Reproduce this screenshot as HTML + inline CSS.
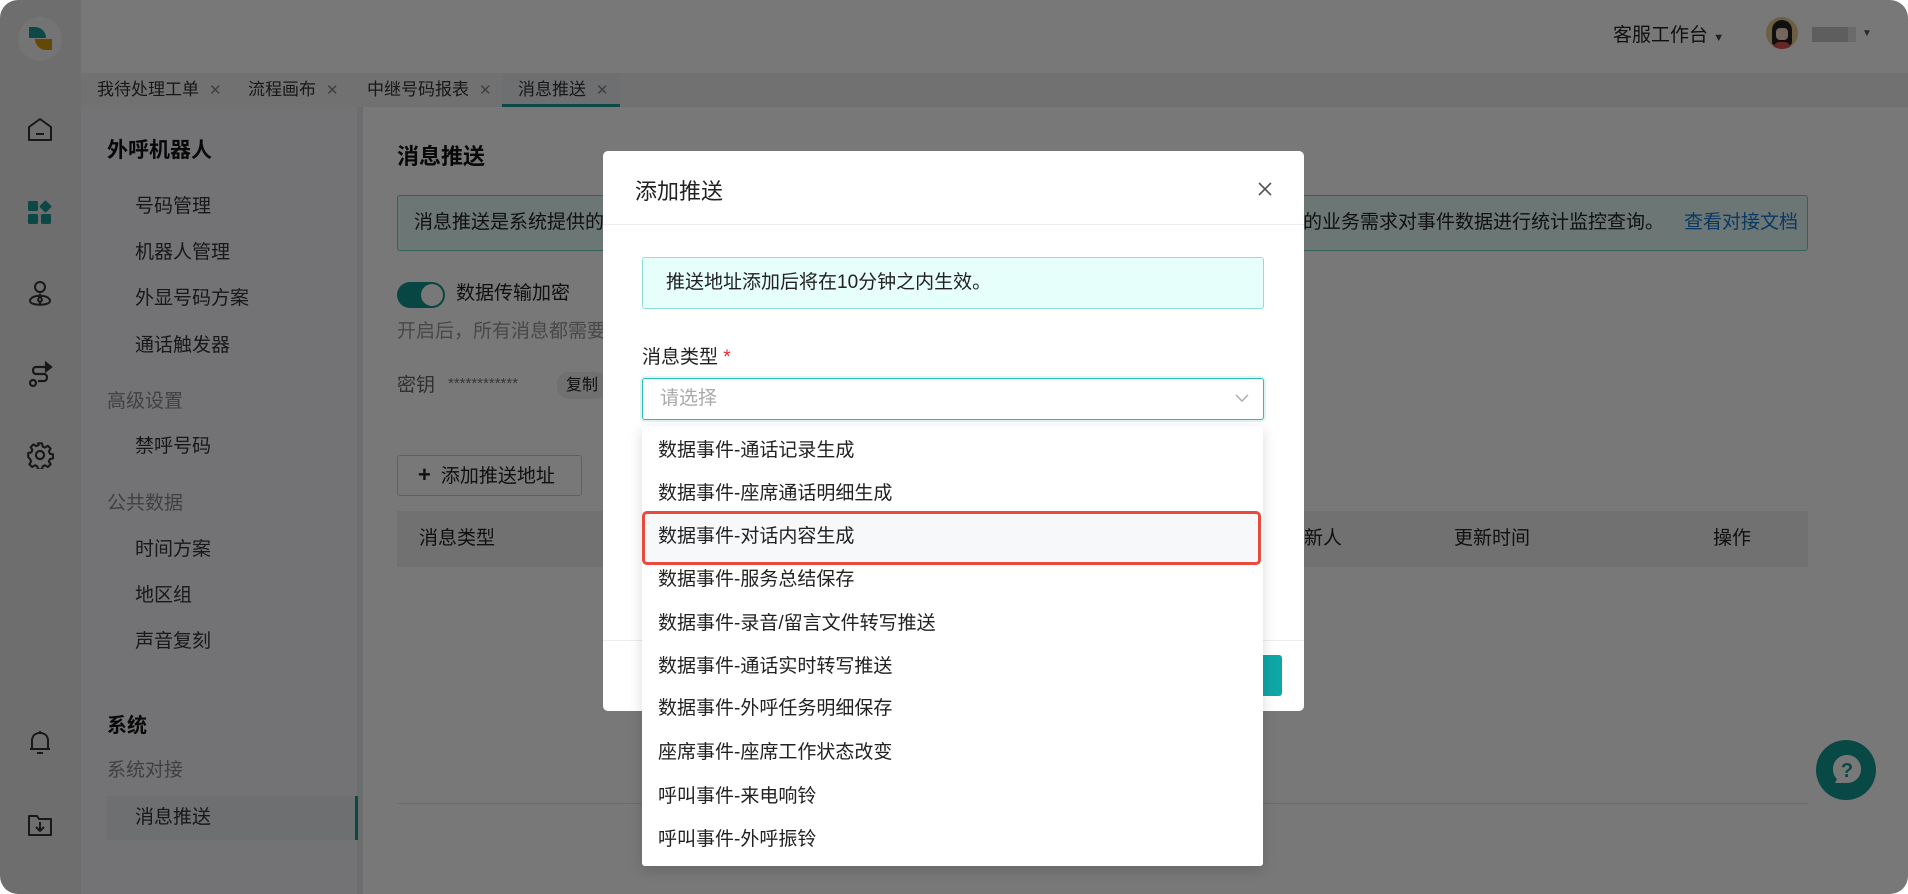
<!DOCTYPE html>
<html><head><meta charset="utf-8">
<style>
*{box-sizing:border-box;margin:0;padding:0}
html,body{width:1908px;height:894px;overflow:hidden;background:#fff}
body{font-family:"Liberation Sans","Noto Sans CJK SC",sans-serif;color:#222;position:relative}
.win{position:absolute;left:0;top:0;width:1908px;height:894px;border-radius:18px;overflow:hidden;background:#fff}
.abs{position:absolute;white-space:nowrap}
.rail{left:0;top:0;width:81px;height:894px;background:#e9eaec}
.top{left:81px;top:0;width:1827px;height:73px;background:#fff}
.tabs{left:81px;top:73px;width:1827px;height:34px;background:#f0f0f0}
.tab{position:absolute;top:73px;height:34px;line-height:34px;font-size:17px;color:#333}
.tab .x{color:#888;font-size:15px;margin-left:10px}
.side{left:81px;top:107px;width:282px;height:787px;background:#f4f5f8}
.si{position:absolute;font-size:19px;line-height:24px;color:#333}
.sg{color:#888}
.sb{font-weight:bold;font-size:21px;color:#111}
.overlay{left:0;top:0;width:1908px;height:894px;background:rgba(0,0,0,0.53)}
.t{font-size:19px;line-height:24px}
</style></head><body>
<div class="win">
<div class="abs rail"></div>
<div class="abs" style="left:18px;top:17px;width:44px;height:44px;border-radius:50%;background:#f6f6f6"></div>
<div class="abs" style="left:29px;top:27px;width:17px;height:11px;background:#1a9a96;border-top-right-radius:11px"></div>
<div class="abs" style="left:35px;top:39px;width:17px;height:11px;background:#d49a0c;border-bottom-left-radius:11px"></div>
<!-- rail icons -->
<svg class="abs" style="left:26px;top:116px" width="28" height="28" viewBox="0 0 28 28" fill="none" stroke="#333" stroke-width="2"><path d="M3 11 L14 3 L25 11 V24 H3 Z" stroke-linejoin="round"/><path d="M10 18 H18"/></svg>
<svg class="abs" style="left:27px;top:199px" width="28" height="28" viewBox="0 0 28 28" fill="#1a9a96"><rect x="1" y="2" width="10" height="10" rx="1.5"/><rect x="14" y="3" width="9" height="9" rx="1" transform="rotate(45 18.5 7.5)"/><rect x="1" y="15" width="10" height="10" rx="1.5"/><rect x="14" y="15" width="10" height="10" rx="1.5"/></svg>
<svg class="abs" style="left:26px;top:279px" width="28" height="30" viewBox="0 0 28 30" fill="none" stroke="#333" stroke-width="2"><circle cx="14" cy="8" r="5"/><path d="M4 22 C4 15 24 15 24 22 C24 27 4 27 4 22 Z"/><path d="M14 16 L12 21 L14 24 L16 21 Z"/></svg>
<svg class="abs" style="left:26px;top:361px" width="28" height="30" viewBox="0 0 28 30" fill="none" stroke="#333" stroke-width="2.2"><path d="M20 6 H10 C6 6 6 13 10 13 H18 C22 13 22 20 18 20 H12"/><circle cx="7" cy="22" r="3"/><path d="M20 2 L25 6 L20 10 Z" fill="#333"/></svg>
<svg class="abs" style="left:26px;top:441px" width="28" height="28" viewBox="0 0 24 24" fill="none" stroke="#333" stroke-width="1.8"><circle cx="12" cy="12" r="3.5"/><path d="M10.3 2h3.4l.6 2.7 2 .9 2.4-1.5 2.4 2.4-1.5 2.4.9 2 2.7.6v3.4l-2.7.6-.9 2 1.5 2.4-2.4 2.4-2.4-1.5-2 .9-.6 2.7h-3.4l-.6-2.7-2-.9-2.4 1.5-2.4-2.4 1.5-2.4-.9-2L1.9 13.7v-3.4l2.7-.6.9-2L4 5.3l2.4-2.4 2.4 1.5 2-.9z" stroke-linejoin="round"/></svg>
<svg class="abs" style="left:27px;top:729px" width="26" height="28" viewBox="0 0 26 28" fill="none" stroke="#333" stroke-width="2"><path d="M5 20 V12 C5 7 8 4 13 4 C18 4 21 7 21 12 V20 H3 H23"/><path d="M10 24 H16"/><path d="M13 2 V4"/></svg>
<svg class="abs" style="left:27px;top:811px" width="26" height="28" viewBox="0 0 26 28" fill="none" stroke="#333" stroke-width="2"><path d="M2 5 H10 L12 8 H24 V24 H2 Z" stroke-linejoin="round"/><path d="M13 11 V19 M9 16 L13 20 L17 16"/></svg>

<div class="abs top"></div>
<div class="abs" style="left:1613px;top:20px;font-size:19px;color:#222">客服工作台 <span style="font-size:11px;color:#444">▼</span></div>
<div class="abs" style="left:1766px;top:17px;width:32px;height:32px;border-radius:50%;background:#e8c98c;overflow:hidden"><div style="position:absolute;left:6px;top:3px;width:20px;height:26px;background:#222;border-radius:10px 10px 4px 4px"></div><div style="position:absolute;left:10px;top:11px;width:12px;height:12px;background:#f3d9c5;border-radius:4px"></div><div style="position:absolute;left:8px;top:25px;width:16px;height:10px;background:#d9534f;border-radius:6px"></div></div>
<div class="abs" style="left:1812px;top:27px;width:36px;height:15px;background:#c8c8c8"></div>
<div class="abs" style="left:1848px;top:27px;width:8px;height:15px;background:#e4e4e4"></div>
<div class="abs" style="left:1862px;top:28px;font-size:10px;color:#555">▼</div>

<div class="abs tabs"></div>
<div class="abs" style="left:502px;top:73px;width:118px;height:34px;background:#e9ebee;border-bottom:3px solid #1a9a96"></div>
<div class="tab" style="left:97px">我待处理工单<span class="x">✕</span></div>
<div class="tab" style="left:248px">流程画布<span class="x">✕</span></div>
<div class="tab" style="left:367px">中继号码报表<span class="x">✕</span></div>
<div class="tab" style="left:518px">消息推送<span class="x">✕</span></div>

<div class="abs side"></div>
<div class="abs" style="left:357px;top:107px;width:6px;height:787px;background:#e6e8ec"></div>
<div class="si sb" style="left:107px;top:139px">外呼机器人</div>
<div class="si" style="left:135px;top:195px">号码管理</div>
<div class="si" style="left:135px;top:241px">机器人管理</div>
<div class="si" style="left:135px;top:287px">外显号码方案</div>
<div class="si" style="left:135px;top:334px">通话触发器</div>
<div class="si sg" style="left:107px;top:390px">高级设置</div>
<div class="si" style="left:135px;top:435px">禁呼号码</div>
<div class="si sg" style="left:107px;top:492px">公共数据</div>
<div class="si" style="left:135px;top:538px">时间方案</div>
<div class="si" style="left:135px;top:584px">地区组</div>
<div class="si" style="left:135px;top:630px">声音复刻</div>
<div class="si sb" style="left:107px;top:714px;font-size:20px">系统</div>
<div class="si sg" style="left:107px;top:759px">系统对接</div>
<div class="abs" style="left:107px;top:796px;width:251px;height:44px;background:#eaebee;border-right:3px solid #1a9a96"></div>
<div class="si" style="left:135px;top:806px">消息推送</div>

<!-- main -->
<div class="abs" style="left:397px;top:139px;font-size:22px;font-weight:bold;color:#111">消息推送</div>
<div class="abs" style="left:397px;top:195px;width:1411px;height:56px;background:#e6fbf8;border:1px solid #6fd1c6;border-radius:3px"></div>
<div class="abs t" style="left:414px;top:211px;color:#222">消息推送是系统提供的</div>
<div class="abs t" style="left:1303px;top:211px;color:#222">的业务需求对事件数据进行统计监控查询。<span style="color:#1677d2;margin-left:20px">查看对接文档</span></div>
<div class="abs" style="left:397px;top:282px;width:48px;height:26px;border-radius:13px;background:#11968f"></div>
<div class="abs" style="left:421px;top:284px;width:22px;height:22px;border-radius:50%;background:#fff"></div>
<div class="abs t" style="left:456px;top:282px">数据传输加密</div>
<div class="abs t" style="left:397px;top:320px;color:#999">开启后，所有消息都需要</div>
<div class="abs t" style="left:397px;top:374px;color:#666">密钥</div>
<div class="abs" style="left:448px;top:375px;font-size:15px;color:#777">************</div>
<div class="abs" style="left:557px;top:372px;width:50px;height:27px;border-radius:12px;background:#eee;font-size:16px;line-height:27px;text-align:center">复制</div>
<div class="abs" style="left:397px;top:455px;width:185px;height:41px;border:1px solid #ccc;border-radius:3px;background:#fff"></div>
<div class="abs t" style="left:418px;top:463px"><b style="font-size:22px;margin-right:10px">+</b>添加推送地址</div>
<div class="abs" style="left:397px;top:511px;width:1411px;height:56px;background:#f0f0f0"></div>
<div class="abs t" style="left:419px;top:527px">消息类型</div>
<div class="abs t" style="left:1285px;top:527px">更新人</div>
<div class="abs t" style="left:1454px;top:527px">更新时间</div>
<div class="abs t" style="left:1713px;top:527px">操作</div>
<div class="abs" style="left:397px;top:803px;width:1411px;height:1px;background:#e5e5e5"></div>
<div class="abs" style="left:1816px;top:740px;width:60px;height:60px;border-radius:50%;background:#139a94"></div>
<svg class="abs" style="left:1830px;top:752px" width="34" height="36" viewBox="0 0 34 36"><path d="M17 3 C25 3 31 9 31 17 C31 25 25 31 17 31 H5 L7 27 C4 24 3 21 3 17 C3 9 9 3 17 3Z" fill="#fff"/><text x="17" y="25" font-size="20" font-weight="bold" text-anchor="middle" fill="#139a94" font-family="Liberation Sans">?</text></svg>

<div class="abs overlay"></div>

<!-- modal -->
<div class="abs" style="left:603px;top:151px;width:701px;height:560px;background:#fff;border-radius:5px"></div>
<div class="abs" style="left:635px;top:174px;font-size:22px;color:#222">添加推送</div>
<svg class="abs" style="left:1257px;top:181px" width="16" height="16" viewBox="0 0 16 16" stroke="#555" stroke-width="1.6"><path d="M2 2 L14 14 M14 2 L2 14"/></svg>
<div class="abs" style="left:603px;top:224px;width:701px;height:1px;background:#ececec"></div>
<div class="abs" style="left:642px;top:257px;width:622px;height:52px;background:#e6fffb;border:1px solid #8ee0d6;border-radius:3px"></div>
<div class="abs t" style="left:666px;top:271px">推送地址添加后将在10分钟之内生效。</div>
<div class="abs t" style="left:642px;top:346px">消息类型 <span style="color:#f5222d">*</span></div>
<div class="abs" style="left:642px;top:378px;width:622px;height:42px;border:1px solid #2bbdb3;border-radius:3px;box-shadow:0 0 0 2px rgba(43,189,179,0.15)"></div>
<div class="abs t" style="left:660px;top:387px;color:#aaa">请选择</div>
<svg class="abs" style="left:1234px;top:392px" width="16" height="12" viewBox="0 0 16 12" fill="none" stroke="#aaa" stroke-width="1.4"><path d="M2 3 L8 9 L14 3"/></svg>
<div class="abs" style="left:603px;top:640px;width:701px;height:1px;background:#ececec"></div>
<div class="abs" style="left:1180px;top:655px;width:102px;height:41px;background:#0fa6a6;border-radius:3px"></div>

<!-- dropdown -->
<div class="abs" style="left:642px;top:426px;width:621px;height:440px;background:#fff;border-radius:3px;box-shadow:0 4px 14px rgba(0,0,0,0.15)"></div>
<div class="abs" style="left:642px;top:511px;width:619px;height:54px;background:#f7f8fa;border:3px solid #ea4a3c;border-radius:5px"></div>
<div class="abs t" style="left:658px;top:439px">数据事件-通话记录生成</div>
<div class="abs t" style="left:658px;top:482px">数据事件-座席通话明细生成</div>
<div class="abs t" style="left:658px;top:525px">数据事件-对话内容生成</div>
<div class="abs t" style="left:658px;top:568px">数据事件-服务总结保存</div>
<div class="abs t" style="left:658px;top:612px">数据事件-录音/留言文件转写推送</div>
<div class="abs t" style="left:658px;top:655px">数据事件-通话实时转写推送</div>
<div class="abs t" style="left:658px;top:697px">数据事件-外呼任务明细保存</div>
<div class="abs t" style="left:658px;top:741px">座席事件-座席工作状态改变</div>
<div class="abs t" style="left:658px;top:785px">呼叫事件-来电响铃</div>
<div class="abs t" style="left:658px;top:828px">呼叫事件-外呼振铃</div>
</div>
</body></html>
